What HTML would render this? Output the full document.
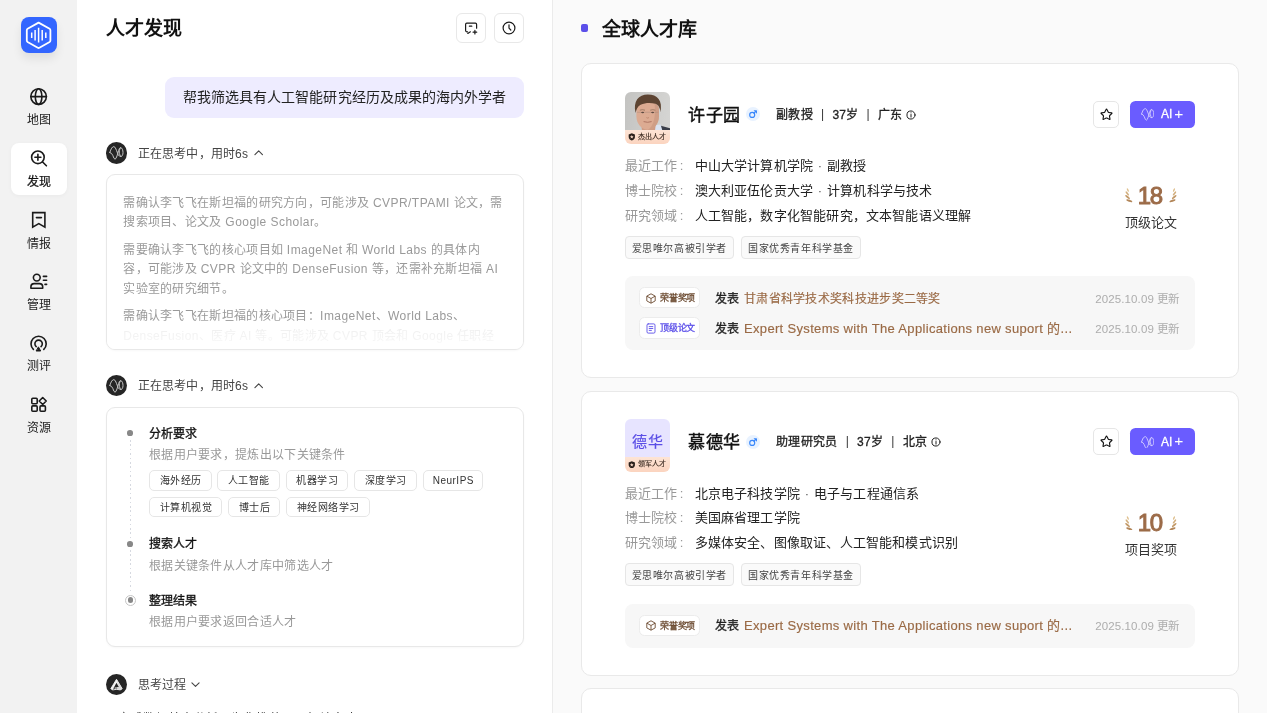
<!DOCTYPE html>
<html lang="zh-CN">
<head>
<meta charset="utf-8">
<title>人才发现</title>
<style>
*{box-sizing:border-box;margin:0;padding:0}
html,body{width:1267px;height:713px;overflow:hidden;background:#fff}
body{font-family:"Liberation Sans",sans-serif;color:#1f1f1f;position:relative;-webkit-font-smoothing:antialiased}
.abs{position:absolute}
svg{display:block}
/* sidebar */
#side{will-change:transform;position:absolute;left:0;top:0;width:77px;height:713px;background:#f2f2f2}
#logo{position:absolute;left:21px;top:17px;width:35.5px;height:36px;border-radius:8px;background:#3366ff;box-shadow:0 6px 10px rgba(0,0,0,.08)}
.nav{position:absolute;left:11px;width:56px;height:54px;border-radius:8px;text-align:center}
.nav.on{background:#fff;box-shadow:0 1px 4px rgba(0,0,0,.04)}
.nav svg{position:absolute;left:17px;top:5px;width:22px;height:22px}
.nav span{position:absolute;left:0;width:56px;top:32.5px;font-size:12px;line-height:14px;color:#222;letter-spacing:0}
.nav.on span{top:32px;font-weight:normal;-webkit-text-stroke:.22px #111;color:#111}
/* left panel */
#left{will-change:transform;position:absolute;left:77px;top:0;width:476px;height:713px;background:#fff;border-right:1px solid #ebebeb;overflow:hidden}
h1{position:absolute;font-size:19px;letter-spacing:0;line-height:28px;font-weight:bold;color:#111}
.ibtn{position:absolute;width:30px;height:30px;border:1px solid #e8e8e8;border-radius:6px;background:#fff}
.ibtn svg{position:absolute;left:6px;top:6px;width:16px;height:16px}
#bubble{position:absolute;left:88.2px;top:77.3px;width:358.8px;height:40.5px;border-radius:9px;background:#eeecff;font-size:14px;letter-spacing:.05px;line-height:41px;color:#222;text-align:center;white-space:nowrap}
.think{position:absolute;left:28.7px;height:21.2px;font-size:12px;letter-spacing:.15px;line-height:21.2px;color:#444;white-space:nowrap}
.think .av{position:absolute;left:0;top:0;width:21.2px;height:21.2px;border-radius:50%;background:#262626}
.think .t{position:absolute;left:32.2px;top:1.2px}
.box{position:absolute;left:29px;width:418px;border:1px solid #e8e8e8;border-radius:9px;background:#fff;overflow:hidden;box-shadow:0 1px 2px rgba(0,0,0,.03)}
#box1 p{position:absolute;left:16.3px;width:385px;font-size:12px;letter-spacing:.3px;line-height:19.5px;color:#999}
#box1 p span{display:block;white-space:nowrap}
#box1 p i{font-style:normal;letter-spacing:.45px}
#fade{position:absolute;left:0;right:0;bottom:0;height:30px;background:linear-gradient(rgba(255,255,255,0),rgba(255,255,255,.86) 38%,rgba(255,255,255,.9) 70%,#fff)}
.st{position:absolute;left:42px;margin-top:1.1px;font-size:12px;letter-spacing:.15px;line-height:18px;font-weight:normal;-webkit-text-stroke:.3px #111;color:#111;white-space:nowrap}
.sd{position:absolute;left:42px;margin-top:1.2px;font-size:12px;letter-spacing:.3px;line-height:18px;color:#999;white-space:nowrap}
.dot{position:absolute;left:21px;width:5.7px;height:5.7px;border-radius:50%;background:#888}
.tag{position:absolute;height:20.6px;border:1px solid #e6e6e6;border-radius:5px;font-size:10px;letter-spacing:.5px;text-indent:.5px;line-height:20.8px;color:#333;text-align:center;white-space:nowrap;background:#fff}
/* right panel */
#right{will-change:transform;position:absolute;left:553px;top:0;width:714px;height:713px;background:#fafafa;overflow:hidden}
.card{position:absolute;left:28px;width:658px;background:#fff;border:1px solid #e9e9e9;border-radius:10px}
.avt{position:absolute;left:43px;width:46px;height:53px;border-radius:6px;overflow:hidden}
.avt .bd{position:absolute;left:0;bottom:0;width:46px;height:14.3px;background:linear-gradient(#fde4d5,#fbd4bf);font-size:7px;letter-spacing:.1px;line-height:14.6px;font-weight:normal;-webkit-text-stroke:.15px #3a2a20;color:#3a2a20;white-space:nowrap}
.nm{position:absolute;left:107px;font-size:17px;letter-spacing:.5px;line-height:28px;font-weight:normal;-webkit-text-stroke:.45px #111;color:#111;white-space:nowrap}
.meta{position:absolute;left:195px;font-size:12px;letter-spacing:.3px;line-height:18px;font-weight:normal;-webkit-text-stroke:.3px #222;color:#222;white-space:nowrap}
.lb{position:absolute;left:43px;font-size:13px;letter-spacing:.1px;line-height:20px;color:#999;white-space:nowrap}
.vl{position:absolute;left:114px;font-size:13px;letter-spacing:.18px;line-height:20px;color:#222;white-space:nowrap}
.ctag{position:absolute;height:22.7px;border:1px solid #e6e6e6;border-radius:4px;background:#fafafa;font-size:10px;letter-spacing:.6px;text-indent:.6px;line-height:24px;color:#444;overflow:hidden;text-align:center;white-space:nowrap}
.star{position:absolute;left:512px;width:26px;height:26px;border:1px solid #e6e6e6;border-radius:5px;background:#fff}
.ai{position:absolute;left:548px;width:66px;height:26px;border-radius:5.5px;background:#6a5cff;color:#fff;font-size:14px;line-height:26px;white-space:nowrap}
.num{position:absolute;left:520px;width:100px;text-align:center;font-size:24px;letter-spacing:-1.3px;text-indent:-1.3px;line-height:30px;font-weight:normal;-webkit-text-stroke:.95px #9c6b48;color:#9c6b48}
.nl{position:absolute;left:520px;width:100px;margin-top:.5px;text-align:center;font-size:13px;letter-spacing:.1px;line-height:18px;color:#333}
.act{position:absolute;left:43px;width:571px;border-radius:8px;background:#f7f7f7}
.bg{position:absolute;left:14.6px;width:61.2px;height:21.2px;border:1px solid #ececec;border-radius:5.5px;background:#fff;font-size:9px;letter-spacing:-.35px;line-height:20.4px;font-weight:normal;-webkit-text-stroke:.3px;white-space:nowrap}
.pb{position:absolute;left:90px;margin-top:.7px;font-size:12px;letter-spacing:0;line-height:20px;font-weight:normal;-webkit-text-stroke:.3px #222;color:#222;white-space:nowrap}
.pt{position:absolute;left:119.4px;margin-top:.7px;font-size:12px;letter-spacing:.3px;line-height:20px;color:#9a6a45;white-space:nowrap;-webkit-text-stroke:.15px #9a6a45}
.dt{position:absolute;margin-top:.7px;right:15.5px;font-size:11.5px;letter-spacing:.12px;line-height:20px;color:#adadad;white-space:nowrap}
.sp{display:inline-block;width:19.3px;text-align:center;font-weight:normal;-webkit-text-stroke:0;color:#333;position:relative;top:-0.5px}
.inf{display:inline-block;vertical-align:-1px;margin-left:3.4px}
.md{display:inline-block;width:13.8px;text-align:center;color:#555}
.en{font-size:13px;letter-spacing:.33px}
</style>
</head>
<body>
<div id="side">
  <div id="logo"></div>
  <div class="nav" style="top:80.4px"><span>地图</span></div>
  <div class="nav on" style="top:142.5px;height:52.5px"><span>发现</span></div>
  <div class="nav" style="top:204px"><span>情报</span></div>
  <div class="nav" style="top:265.2px"><span>管理</span></div>
  <div class="nav" style="top:326.6px"><span>测评</span></div>
  <div class="nav" style="top:388.4px"><span>资源</span></div>

  <svg class="abs" style="left:0;top:0" width="77" height="713" viewBox="0 0 77 713" fill="none" stroke="#1a1a1a" stroke-width="1.6" stroke-linecap="round" stroke-linejoin="round">
    <!-- logo glyph -->
    <g stroke="#fff" stroke-width="1.8">
      <path d="M38.6 22.6 L49.6 28.8 Q50.4 29.3 50.4 30.2 L50.4 40.6 Q50.4 41.5 49.6 42 L39.4 47.8 Q38.6 48.2 37.8 47.8 L27.6 42 Q26.8 41.5 26.8 40.6 L26.8 30.2 Q26.8 29.3 27.6 28.8 Z"/>
      <g stroke-width="1.5" stroke-linecap="butt">
        <path d="M38.6 27.8V42.4M35.1 29.9V40.4M42.2 29.9V40.4M31.7 32.5V38.1M45.8 32.5V38.1"/>
      </g>
    </g>
    <!-- globe -->
    <circle cx="38.6" cy="96.6" r="7.8"/><ellipse cx="38.6" cy="96.6" rx="3.3" ry="7.8"/><path d="M30.8 96.6H46.4"/>
    <!-- search plus -->
    <circle cx="37.9" cy="157.3" r="6.3"/><path d="M42.6 162 L46.4 165.8M37.9 154.3V160.3M34.9 157.3H40.9"/>
    <!-- bookmark -->
    <path d="M32.7 212.6H44.9V227.2L38.8 223.6L32.7 227.2Z" stroke-linejoin="miter"/><path d="M36.4 217.6H41.4"/>
    <!-- user list -->
    <circle cx="36.8" cy="277.6" r="3.4"/><path d="M30.9 288.3V286.9Q30.9 283.6 34.2 283.6H39.4Q42.7 283.6 42.7 286.9V288.3Z"/><path d="M43.4 276.4H46.6M43.4 280.3H46.6M45 284.4H46.6"/>
    <!-- target -->
    <path d="M33.4 349.4A7.6 7.6 0 1 1 43.8 349.4"/><path d="M36.2 346.6A3.7 3.7 0 1 1 41 346.6"/><path d="M38.6 347.2L40.7 351H36.5Z" fill="#1a1a1a" stroke-width="1"/>
    <!-- grid -->
    <rect x="31.8" y="398.3" width="5.4" height="5.4" rx="1"/><rect x="31.8" y="405.9" width="5.4" height="5.4" rx="1"/><rect x="40" y="405.9" width="5.4" height="5.4" rx="1"/><path d="M42.7 397.5L46.2 401L42.7 404.5L39.2 401Z"/>
  </svg>
</div>

<div id="left">
  <h1 style="left:29.3px;top:14.6px">人才发现</h1>
  <div class="ibtn" style="left:379px;top:13px"><svg viewBox="0 0 16 16" fill="none" stroke="#1a1a1a" stroke-width="1.2" stroke-linecap="round" stroke-linejoin="round"><path d="M13.6 8.2V4.4Q13.6 3.2 12.4 3.2H3.8Q2.6 3.2 2.6 4.4V10.6Q2.6 11.8 3.8 11.8H4.6M4.8 13.4L7.4 11.8"/><path d="M6.4 6.2H8.8M11.9 10.4V14M10.1 12.2H13.7"/></svg></div>
  <div class="ibtn" style="left:417px;top:13px"><svg viewBox="0 0 16 16" fill="none" stroke="#1a1a1a" stroke-width="1.2" stroke-linecap="round" stroke-linejoin="round"><circle cx="8" cy="8" r="5.9"/><path d="M8 4.8V8.2L9.8 10"/></svg></div>
  <div id="bubble">帮我筛选具有人工智能研究经历及成果的海内外学者</div>

  <div class="think" style="top:142.4px"><div class="av"><svg viewBox="0 0 21.2 21.2" width="21.2" height="21.2" fill="none" stroke="#c4c4c4" stroke-width="1" stroke-linecap="round" stroke-linejoin="round"><path d="M3.8 10.5Q5.6 4.6 7.8 4.6Q9.3 4.6 10.5 8.4L12.2 12.8Q13.2 14.6 14.9 14.5"/><path d="M3.8 10.5Q5.8 10.8 6.8 13.4Q8 17.2 9 17.2Q10 17.2 11 14L12.6 8.6Q13.4 5.7 14.5 5.7C16.4 5.7 17 8.6 17 10.6C17 12.8 16.2 14.5 14.9 14.5"/><path d="M14.5 5.7C13.4 7.6 13 9.6 13.4 11.4C13.7 12.8 14.2 13.9 14.9 14.5"/></svg></div><div class="t">正在思考中，用时6s</div><svg class="abs" style="left:148.2px;top:7px" width="9.4" height="7.5" viewBox="0 0 10 8" fill="none" stroke="#444" stroke-width="1.2" stroke-linecap="round" stroke-linejoin="round"><path d="M1 6L5 2L9 6"/></svg></div>
  <div class="box" id="box1" style="top:174px;height:176px">
    <p style="top:18.8px"><span>需确认李飞飞在斯坦福的研究方向，可能涉及 <i>CVPR/TPAMI</i> 论文，需</span><span>搜索项目、论文及 <i>Google Scholar</i>。</span></p>
    <p style="top:65.6px"><span>需要确认李飞飞的核心项目如 <i>ImageNet</i> 和 <i>World Labs</i> 的具体内</span><span>容，可能涉及 <i>CVPR</i> 论文中的 <i>DenseFusion</i> 等，还需补充斯坦福 <i>AI</i></span><span>实验室的研究细节。</span></p>
    <p style="top:132.2px"><span>需确认李飞飞在斯坦福的核心项目：<i>ImageNet</i>、<i>World Labs</i>、</span><span><i>DenseFusion</i>、医疗 <i>AI</i> 等。可能涉及 <i>CVPR</i> 顶会和 <i>Google</i> 任职经</span></p>
    <div id="fade"></div>
  </div>

  <div class="think" style="top:374.8px"><div class="av"><svg viewBox="0 0 21.2 21.2" width="21.2" height="21.2" fill="none" stroke="#c4c4c4" stroke-width="1" stroke-linecap="round" stroke-linejoin="round"><path d="M3.8 10.5Q5.6 4.6 7.8 4.6Q9.3 4.6 10.5 8.4L12.2 12.8Q13.2 14.6 14.9 14.5"/><path d="M3.8 10.5Q5.8 10.8 6.8 13.4Q8 17.2 9 17.2Q10 17.2 11 14L12.6 8.6Q13.4 5.7 14.5 5.7C16.4 5.7 17 8.6 17 10.6C17 12.8 16.2 14.5 14.9 14.5"/><path d="M14.5 5.7C13.4 7.6 13 9.6 13.4 11.4C13.7 12.8 14.2 13.9 14.9 14.5"/></svg></div><div class="t">正在思考中，用时6s</div><svg class="abs" style="left:148.2px;top:7px" width="9.4" height="7.5" viewBox="0 0 10 8" fill="none" stroke="#444" stroke-width="1.2" stroke-linecap="round" stroke-linejoin="round"><path d="M1 6L5 2L9 6"/></svg></div>
  <div class="box" id="box2" style="top:406.7px;height:240.5px">
    <div class="abs" style="left:22.6px;top:32.3px;width:1px;height:152px;background:repeating-linear-gradient(to bottom,#d6d9e0 0,#d6d9e0 1.7px,transparent 1.7px,transparent 4.4px)"></div>
    <div class="dot" style="left:20.3px;top:22.4px"></div>
    <div class="st" style="top:15.9px">分析要求</div>
    <div class="sd" style="top:36.8px">根据用户要求，提炼出以下关键条件</div>
    <div class="tag" style="left:42px;top:62.3px;width:62.6px">海外经历</div>
    <div class="tag" style="left:110.4px;top:62.3px;width:62.6px">人工智能</div>
    <div class="tag" style="left:178.8px;top:62.3px;width:62.6px">机器学习</div>
    <div class="tag" style="left:247.2px;top:62.3px;width:62.6px">深度学习</div>
    <div class="tag" style="left:315.8px;top:62.3px;width:60.6px">NeurIPS</div>
    <div class="tag" style="left:42px;top:88.9px;width:73.2px">计算机视觉</div>
    <div class="tag" style="left:121px;top:88.9px;width:52.3px">博士后</div>
    <div class="tag" style="left:179.1px;top:88.9px;width:83.9px">神经网络学习</div>
    <div class="dot" style="left:20.3px;top:133.3px;box-shadow:0 0 0 3px #fff"></div>
    <div class="st" style="top:126.7px">搜索人才</div>
    <div class="sd" style="top:148.1px">根据关键条件从人才库中筛选人才</div>
    <div class="abs" style="left:17.8px;top:187px;width:11px;height:11px;border-radius:50%;border:1px solid #c6c6c6;background:#fff"></div><div class="dot" style="left:20.5px;top:189.7px"></div>
    <div class="st" style="top:183.3px">整理结果</div>
    <div class="sd" style="top:204.2px">根据用户要求返回合适人才</div>
  </div>

  <div class="think" style="top:673.9px"><div class="av"><svg viewBox="0 0 21.2 21.2" width="21.2" height="21.2"><path d="M10.5 5.3L16.2 14.7L14.2 15.9Q10.5 14.7 6.8 15.9L4.8 14.7Z" fill="#f4f4f4" stroke="#f4f4f4" stroke-width=".9" stroke-linejoin="round"/><path d="M10.5 5.3L16.2 14.7L14.2 15.9L12.8 13.2Z" fill="#dcdcdc"/><path d="M8 13H9.7L9.4 15.1Q8 15.4 6.9 15.9Z" fill="#555"/><path d="M9.7 13H11.4L11.6 15.1Q10.5 14.95 9.4 15.1Z" fill="#909090"/><path d="M11.4 13H13L14.3 16Q13 15.4 11.6 15.1Z" fill="#d4d4d4"/><path d="M10.5 8.7L12.8 13.1H8.2Z" fill="#262626"/></svg></div><div class="t">思考过程</div><svg class="abs" style="left:85.2px;top:7.6px" width="9" height="7.2" viewBox="0 0 10 8" fill="none" stroke="#444" stroke-width="1.2" stroke-linecap="round" stroke-linejoin="round"><path d="M1 2L5 6L9 2"/></svg></div>
  <div class="abs" style="left:28.8px;top:707.7px;font-size:12px;letter-spacing:.55px;line-height:22px;color:#333;white-space:nowrap">已完成数据检索分析，为你推荐以下相关人才：</div>
</div>

<div id="right">
  <div class="abs" style="left:28px;top:24.4px;width:7px;height:7.4px;border-radius:2px;background:#5b4fe9"></div>
  <h1 style="left:48.6px;top:15.9px;letter-spacing:.1px">全球人才库</h1>

  <div class="card" id="c1" style="top:63px;height:315px"></div>
  <div class="card" id="c2" style="top:391px;height:284.5px"></div>
  <div class="card" id="c3" style="top:688px;height:100px"></div>
  <!-- card 1 content -->
  <div class="avt" style="left:71.6px;top:91.6px;width:45.6px;height:52.8px"><div class="abs" style="left:0;top:0;width:46px;height:38.6px;background:linear-gradient(100deg,#c3c3c1,#cfcfcd 60%,#d6d6d4)">
      <svg viewBox="0 0 46 38.6" width="46" height="38.6">
      <path d="M35 33.5L46 36.5V38.6H34Z" fill="#3a3e49"/><path d="M29.5 33.6L35.6 32.6L37.4 38.6H26Z" fill="#dbe3f1"/>
      <path d="M16 30L17 38.6H30L31 30Z" fill="#cf9c84"/>
      <path d="M11.4 18C11.4 12.6 15 10 22.4 10C30 10 34 12.6 34 18L34 24.4C34 31.6 28.4 37.8 22.8 37.8C17 37.8 11.4 31.6 11.4 24.4Z" fill="#dcab92"/><path d="M29.5 10.9C32.6 11.8 34 14 34 18L34 24.4C34 31.6 28.4 37.8 22.8 37.8C29 34 31 24 29.5 10.9Z" fill="#c4937b" opacity=".55"/>
      <path d="M10.6 21C7.8 9 13.6 2.4 22.8 2.4C32.4 2.4 38 8.4 35.4 20.4C35.2 16.4 33.6 12.8 30.4 11.8C26 10.6 20.6 10.4 15.6 12.8C12.4 14.4 11.4 17.6 10.6 21Z" fill="#5d4432"/>
      <path d="M12 20.3H33.4" stroke="#a98a7a" stroke-width=".5"/><ellipse cx="17.6" cy="20.6" rx="1.5" ry=".75" fill="#5e4a40"/><ellipse cx="27.6" cy="20.6" rx="1.5" ry=".75" fill="#5e4a40"/>
      <path d="M14.8 18.2Q17.4 17.2 20 18.2M25.2 18.2Q27.8 17.2 30.4 18.2" stroke="#8a6a55" stroke-width=".7" fill="none"/>
      <path d="M21.4 25.6Q22.6 26.6 24 25.6" stroke="#b98068" stroke-width=".8" fill="none"/><path d="M18.6 29.6Q22.6 31 26.6 29.6" stroke="#a96f5e" stroke-width=".9" fill="none"/></svg>
    </div><div class="bd"><div class="abs" style="left:3.9px;top:3.4px"><svg viewBox="0 0 8 8" width="7.6" height="7.6"><path d="M4 0.3L7.3 1.5V4.2C7.3 6 5.8 7.3 4 7.8C2.2 7.3 0.7 6 0.7 4.2V1.5Z" fill="#2b211c"/><path d="M4 2.2L4.6 3.4L5.9 3.5L4.9 4.4L5.2 5.7L4 5L2.8 5.7L3.1 4.4L2.1 3.5L3.4 3.4Z" fill="#fbdac8"/></svg></div><span class="abs" style="left:13.2px;top:0">杰出人才</span></div></div>
  <div class="nm" style="left:135px;top:102.0px">许子园</div>
  <div class="abs" style="left:192.6px;top:107.3px;width:14px;height:14px;border-radius:50%;background:#e8f2ff"><svg viewBox="0 0 14 14" width="14" height="14" fill="none" stroke="#3887fb" stroke-width="1.15" stroke-linecap="round" stroke-linejoin="round"><circle cx="6.2" cy="7.9" r="2.5"/><path d="M8 6.1L10.3 3.8M8.3 3.7H10.4V5.8"/></svg></div>
  <div class="meta" style="left:223.2px;top:105.5px">副教授<span class="sp">|</span>37岁<span class="sp">|</span>广东<span class="inf"><svg viewBox="0 0 10 10" width="10" height="10" fill="none" stroke="#1f1f1f" stroke-width="1" stroke-linecap="round"><circle cx="5" cy="5" r="4.05"/><path d="M5 4.5V7.1M5 2.85V2.95"/></svg></span></div>
  <div class="star" style="left:540px;top:101px;width:26px;height:26.5px"><div class="abs" style="left:4.7px;top:4.6px"><svg viewBox="0 0 16 16" width="15" height="15" fill="none" stroke="#111" stroke-width="1.2" stroke-linejoin="round" stroke-linecap="round"><path d="M8 2.2Q8.3 2.2 8.5 2.7L9.8 5.4Q9.95 5.75 10.35 5.8L13.4 6.3Q14.2 6.45 13.6 7L11.4 9.1Q11.1 9.4 11.2 9.8L11.7 12.8Q11.8 13.6 11.1 13.2L8.4 11.8Q8 11.6 7.6 11.8L4.9 13.2Q4.2 13.6 4.3 12.8L4.8 9.8Q4.9 9.4 4.6 9.1L2.4 7Q1.8 6.45 2.6 6.3L5.65 5.8Q6.05 5.75 6.2 5.4L7.5 2.7Q7.7 2.2 8 2.2Z"/></svg></div></div>
  <div class="ai" style="left:576.7px;top:101px;width:65.4px;height:26.5px"><div class="abs" style="left:11.6px;top:7.4px"><svg viewBox="3.3 4.1 14.2 13.6" width="13.2" height="12.7" fill="none" stroke="#cfcaff" stroke-width="1" stroke-linecap="round" stroke-linejoin="round"><path d="M3.8 10.5Q5.6 4.6 7.8 4.6Q9.3 4.6 10.5 8.4L12.2 12.8Q13.2 14.6 14.9 14.5"/><path d="M3.8 10.5Q5.8 10.8 6.8 13.4Q8 17.2 9 17.2Q10 17.2 11 14L12.6 8.6Q13.4 5.7 14.5 5.7C16.4 5.7 17 8.6 17 10.6C17 12.8 16.2 14.5 14.9 14.5"/><path d="M14.5 5.7C13.4 7.6 13 9.6 13.4 11.4C13.7 12.8 14.2 13.9 14.9 14.5"/></svg></div><span class="abs" style="left:31.2px;top:0.4px;font-size:12px;-webkit-text-stroke:.3px #fff">AI</span><span class="abs" style="left:44.6px;top:-0.5px;font-size:15.5px">+</span></div>
  <div class="lb" style="left:71.8px;top:156.2px">最近工作<span style="margin-left:2.6px">:</span></div><div class="vl" style="left:141.6px;top:156.2px">中山大学计算机学院<span class="md">·</span>副教授</div>
  <div class="lb" style="left:71.8px;top:181px">博士院校<span style="margin-left:2.6px">:</span></div><div class="vl" style="left:141.6px;top:181px">澳大利亚伍伦贡大学<span class="md">·</span>计算机科学与技术</div>
  <div class="lb" style="left:71.8px;top:205.6px">研究领域<span style="margin-left:2.6px">:</span></div><div class="vl" style="left:141.6px;top:205.6px">人工智能，数字化智能研究，文本智能语义理解</div>
  <div class="num" style="left:547.5px;top:180.5px">18</div>
  <div class="abs" style="left:572px;top:188.4px"><svg viewBox="0 0 8 15" width="7.8" height="14.8"><ellipse cx="2.9" cy="2" rx="1.95" ry=".78" transform="rotate(68 2.9 2)" fill="#dfc08e"/><ellipse cx="2.4" cy="5.5" rx="2.65" ry=".9" transform="rotate(50 2.4 5.5)" fill="#d2ae7c"/><ellipse cx="2.6" cy="9.2" rx="3" ry=".98" transform="rotate(40 2.6 9.2)" fill="#c39a69"/><ellipse cx="4.4" cy="13.1" rx="3.3" ry="1.08" transform="rotate(18 4.4 13.1)" fill="#b3875a"/></svg></div><div class="abs" style="left:616.2px;top:188.4px"><svg style="transform:scaleX(-1)" viewBox="0 0 8 15" width="7.8" height="14.8"><ellipse cx="2.9" cy="2" rx="1.95" ry=".78" transform="rotate(68 2.9 2)" fill="#dfc08e"/><ellipse cx="2.4" cy="5.5" rx="2.65" ry=".9" transform="rotate(50 2.4 5.5)" fill="#d2ae7c"/><ellipse cx="2.6" cy="9.2" rx="3" ry=".98" transform="rotate(40 2.6 9.2)" fill="#c39a69"/><ellipse cx="4.4" cy="13.1" rx="3.3" ry="1.08" transform="rotate(18 4.4 13.1)" fill="#b3875a"/></svg></div>
  <div class="nl" style="left:547.8px;top:213.3px">顶级论文</div>
  <div class="ctag" style="left:71.6px;top:236px;width:109px">爱思唯尔高被引学者</div><div class="ctag" style="left:187.8px;top:236px;width:119.8px">国家优秀青年科学基金</div>
  <div class="act" style="left:71.6px;top:276.4px;width:570.4px;height:73.6px">
    <div class="bg" style="top:10.9px;color:#6b4a30"><div class="abs" style="left:5.5px;top:4.5px"><svg viewBox="0 0 10 11" width="10" height="11" fill="none" stroke="#6b4a30" stroke-width="0.9" stroke-linejoin="round"><path d="M5 0.8L9.2 3.1V7.9L5 10.2L0.8 7.9V3.1Z"/><path d="M0.9 3.2L5 5.5L9.1 3.2M5 5.5V10.1"/></svg></div><span class="abs" style="left:20.2px;top:0">荣誉奖项</span></div>
    <div class="pb" style="top:11.8px">发表</div><div class="pt" style="top:11.8px">甘肃省科学技术奖科技进步奖二等奖</div><div class="dt" style="top:11.8px">2025.10.09 更新</div>
    <div class="bg" style="top:41.1px;color:#5b4fe9"><div class="abs" style="left:5.5px;top:4.5px"><svg viewBox="0 0 10 11" width="10" height="11" fill="none" stroke="#5b4fe9" stroke-width="0.9" stroke-linecap="round" stroke-linejoin="round"><rect x="1" y="0.9" width="8" height="9.2" rx="1.2"/><path d="M3.2 3.6H6.8M3.2 5.5H6.8M3.2 7.4H5.4"/></svg></div><span class="abs" style="left:20.2px;top:0">顶级论文</span></div>
    <div class="pb" style="top:41.5px">发表</div><div class="pt" style="top:41.5px"><span class="en">Expert Systems with The Applications new suport 的...</span></div><div class="dt" style="top:41.5px">2025.10.09 更新</div>
    </div>
  <!-- card 2 content -->
  <div class="avt" style="left:71.6px;top:418.9px;width:45.6px;height:52.8px"><div class="abs" style="left:0;top:0;width:45.6px;height:38.6px;background:#e7e4ff;color:#5b4fe6;-webkit-text-stroke:.2px #5b4fe6;font-size:15px;letter-spacing:.3px;text-indent:.3px;line-height:46.6px;text-align:center;white-space:nowrap">德华</div><div class="bd"><div class="abs" style="left:3.9px;top:3.4px"><svg viewBox="0 0 8 8" width="7.6" height="7.6"><path d="M4 0.3L7.3 1.5V4.2C7.3 6 5.8 7.3 4 7.8C2.2 7.3 0.7 6 0.7 4.2V1.5Z" fill="#2b211c"/><path d="M4 2.2L4.6 3.4L5.9 3.5L4.9 4.4L5.2 5.7L4 5L2.8 5.7L3.1 4.4L2.1 3.5L3.4 3.4Z" fill="#fbdac8"/></svg></div><span class="abs" style="left:13.2px;top:0">领军人才</span></div></div>
  <div class="nm" style="left:135px;top:429.3px">慕德华</div>
  <div class="abs" style="left:192.6px;top:434.6px;width:14px;height:14px;border-radius:50%;background:#e8f2ff"><svg viewBox="0 0 14 14" width="14" height="14" fill="none" stroke="#3887fb" stroke-width="1.15" stroke-linecap="round" stroke-linejoin="round"><circle cx="6.2" cy="7.9" r="2.5"/><path d="M8 6.1L10.3 3.8M8.3 3.7H10.4V5.8"/></svg></div>
  <div class="meta" style="left:223.2px;top:432.8px">助理研究员<span class="sp">|</span>37岁<span class="sp">|</span>北京<span class="inf"><svg viewBox="0 0 10 10" width="10" height="10" fill="none" stroke="#1f1f1f" stroke-width="1" stroke-linecap="round"><circle cx="5" cy="5" r="4.05"/><path d="M5 4.5V7.1M5 2.85V2.95"/></svg></span></div>
  <div class="star" style="left:540px;top:428.3px;width:26px;height:26.5px"><div class="abs" style="left:4.7px;top:4.6px"><svg viewBox="0 0 16 16" width="15" height="15" fill="none" stroke="#111" stroke-width="1.2" stroke-linejoin="round" stroke-linecap="round"><path d="M8 2.2Q8.3 2.2 8.5 2.7L9.8 5.4Q9.95 5.75 10.35 5.8L13.4 6.3Q14.2 6.45 13.6 7L11.4 9.1Q11.1 9.4 11.2 9.8L11.7 12.8Q11.8 13.6 11.1 13.2L8.4 11.8Q8 11.6 7.6 11.8L4.9 13.2Q4.2 13.6 4.3 12.8L4.8 9.8Q4.9 9.4 4.6 9.1L2.4 7Q1.8 6.45 2.6 6.3L5.65 5.8Q6.05 5.75 6.2 5.4L7.5 2.7Q7.7 2.2 8 2.2Z"/></svg></div></div>
  <div class="ai" style="left:576.7px;top:428.3px;width:65.4px;height:26.5px"><div class="abs" style="left:11.6px;top:7.4px"><svg viewBox="3.3 4.1 14.2 13.6" width="13.2" height="12.7" fill="none" stroke="#cfcaff" stroke-width="1" stroke-linecap="round" stroke-linejoin="round"><path d="M3.8 10.5Q5.6 4.6 7.8 4.6Q9.3 4.6 10.5 8.4L12.2 12.8Q13.2 14.6 14.9 14.5"/><path d="M3.8 10.5Q5.8 10.8 6.8 13.4Q8 17.2 9 17.2Q10 17.2 11 14L12.6 8.6Q13.4 5.7 14.5 5.7C16.4 5.7 17 8.6 17 10.6C17 12.8 16.2 14.5 14.9 14.5"/><path d="M14.5 5.7C13.4 7.6 13 9.6 13.4 11.4C13.7 12.8 14.2 13.9 14.9 14.5"/></svg></div><span class="abs" style="left:31.2px;top:0.4px;font-size:12px;-webkit-text-stroke:.3px #fff">AI</span><span class="abs" style="left:44.6px;top:-0.5px;font-size:15.5px">+</span></div>
  <div class="lb" style="left:71.8px;top:483.5px">最近工作<span style="margin-left:2.6px">:</span></div><div class="vl" style="left:141.6px;top:483.5px">北京电子科技学院<span class="md">·</span>电子与工程通信系</div>
  <div class="lb" style="left:71.8px;top:508.3px">博士院校<span style="margin-left:2.6px">:</span></div><div class="vl" style="left:141.6px;top:508.3px">美国麻省理工学院</div>
  <div class="lb" style="left:71.8px;top:532.9px">研究领域<span style="margin-left:2.6px">:</span></div><div class="vl" style="left:141.6px;top:532.9px">多媒体安全、图像取证、人工智能和模式识别</div>
  <div class="num" style="left:547.5px;top:507.8px">10</div>
  <div class="abs" style="left:572px;top:515.7px"><svg viewBox="0 0 8 15" width="7.8" height="14.8"><ellipse cx="2.9" cy="2" rx="1.95" ry=".78" transform="rotate(68 2.9 2)" fill="#dfc08e"/><ellipse cx="2.4" cy="5.5" rx="2.65" ry=".9" transform="rotate(50 2.4 5.5)" fill="#d2ae7c"/><ellipse cx="2.6" cy="9.2" rx="3" ry=".98" transform="rotate(40 2.6 9.2)" fill="#c39a69"/><ellipse cx="4.4" cy="13.1" rx="3.3" ry="1.08" transform="rotate(18 4.4 13.1)" fill="#b3875a"/></svg></div><div class="abs" style="left:616.2px;top:515.7px"><svg style="transform:scaleX(-1)" viewBox="0 0 8 15" width="7.8" height="14.8"><ellipse cx="2.9" cy="2" rx="1.95" ry=".78" transform="rotate(68 2.9 2)" fill="#dfc08e"/><ellipse cx="2.4" cy="5.5" rx="2.65" ry=".9" transform="rotate(50 2.4 5.5)" fill="#d2ae7c"/><ellipse cx="2.6" cy="9.2" rx="3" ry=".98" transform="rotate(40 2.6 9.2)" fill="#c39a69"/><ellipse cx="4.4" cy="13.1" rx="3.3" ry="1.08" transform="rotate(18 4.4 13.1)" fill="#b3875a"/></svg></div>
  <div class="nl" style="left:547.8px;top:540.6px">项目奖项</div>
  <div class="ctag" style="left:71.6px;top:563.3px;width:109px">爱思唯尔高被引学者</div><div class="ctag" style="left:187.8px;top:563.3px;width:119.8px">国家优秀青年科学基金</div>
  <div class="act" style="left:71.6px;top:603.7px;width:570.4px;height:44.2px">
    <div class="bg" style="top:10.9px;color:#6b4a30"><div class="abs" style="left:5.5px;top:4.5px"><svg viewBox="0 0 10 11" width="10" height="11" fill="none" stroke="#6b4a30" stroke-width="0.9" stroke-linejoin="round"><path d="M5 0.8L9.2 3.1V7.9L5 10.2L0.8 7.9V3.1Z"/><path d="M0.9 3.2L5 5.5L9.1 3.2M5 5.5V10.1"/></svg></div><span class="abs" style="left:20.2px;top:0">荣誉奖项</span></div>
    <div class="pb" style="top:11.8px">发表</div><div class="pt" style="top:11.8px"><span class="en">Expert Systems with The Applications new suport 的...</span></div><div class="dt" style="top:11.8px">2025.10.09 更新</div>
    </div>
</div>
</body>
</html>
